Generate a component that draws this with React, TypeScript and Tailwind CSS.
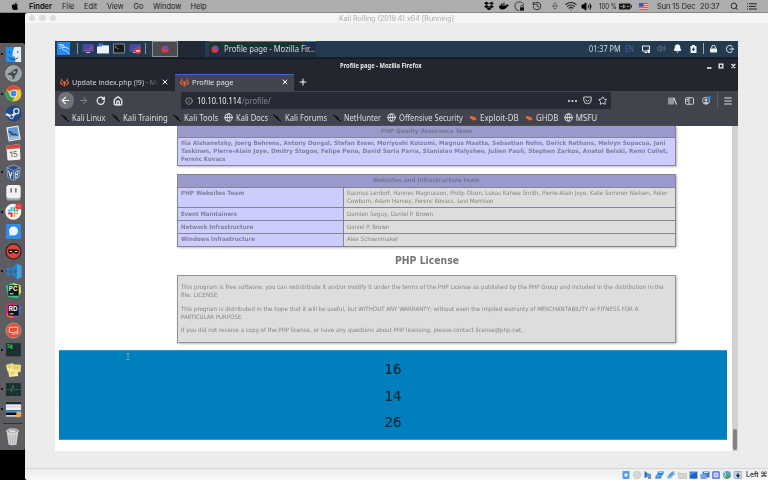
import React, { useLayoutEffect, useRef, useState } from "react";
import { Star, Plus, X, RotateCw, Home, Info, ArrowLeft, ArrowRight, Menu, Search, Wifi, Volume2, Globe, Bell, History } from "lucide-react";
import { FaApple, FaDocker, FaDropbox, FaGitlab } from "react-icons/fa";

/* One line of text, condensed or stretched to fill the width of its box. */
function Fit({ className = "", children }: { className?: string; children: React.ReactNode }) {
  const box = useRef<HTMLSpanElement>(null);
  const inner = useRef<HTMLSpanElement>(null);
  const [scale, setScale] = useState(1);
  useLayoutEffect(() => {
    if (box.current && inner.current && inner.current.offsetWidth) {
      setScale(box.current.getBoundingClientRect().width / inner.current.offsetWidth);
    }
  }, []);
  return (
    <span ref={box} className={`block shrink-0 whitespace-nowrap ${className}`}>
      <span ref={inner} className="inline-block origin-left" style={{ transform: `scaleX(${scale})` }}>
        {children}
      </span>
    </span>
  );
}

function MenuBar() {
  return (
    <header className="flex h-[12.5px] shrink-0 items-center border-b border-[#858585] bg-[#adadad] pt-[1px] font-['Inter',sans-serif] text-[7.4px] leading-[11px] text-[#1b1b1b]">
      <FaApple className="ml-[10.5px] h-[8.5px] w-2 shrink-0 text-black" />
      <Fit className="ml-[10.5px] w-[23px] font-bold">Finder</Fit>
      <Fit className="ml-[10px] w-[12px]">File</Fit>
      <Fit className="ml-[10px] w-[13px]">Edit</Fit>
      <Fit className="ml-[10px] w-[16.5px]">View</Fit>
      <Fit className="ml-[10px] w-[10px]">Go</Fit>
      <Fit className="ml-[9.5px] w-[28px]">Window</Fit>
      <Fit className="ml-[9.5px] w-[16px]">Help</Fit>
      <div className="ml-auto flex items-center">
        <FaDropbox className="size-[10px] text-black" />
        <FaDocker className="ml-[5px] size-[10px] text-black" />
        <svg className="ml-[5px] size-[11px]" viewBox="0 0 11 11" fill="none" stroke="#222" strokeWidth=".8">
          <path d="M9.6 4.2A4.4 4.4 0 1 0 5.2 9.7" />
          <rect x="6" y="6.3" width="4" height="3.3" fill="#111" stroke="none" />
          <path d="M6.8 6.4V5.5a1.2 1.2 0 0 1 2.4 0v.9" />
        </svg>
        <History className="ml-[7px] size-[10px]" strokeWidth={2} />
        <svg className="ml-[9px] h-2.5 w-2" viewBox="0 0 8 10" fill="none" stroke="#555" strokeWidth="1">
          <path d="M1 5h6M2.5 3.5 4 1.8l1.5 1.7M2.5 6.5 4 8.2l1.5-1.7" />
        </svg>
        <Wifi className="ml-[6.5px] size-[12px]" strokeWidth={2.4} />
        <Volume2 className="ml-1 size-[11px] fill-black" strokeWidth={2} />
        <Fit className="ml-[6.5px] w-[18px]">100 %</Fit>
        <svg className="ml-[2.5px] h-[7px] w-[13px]" viewBox="0 0 13 7">
          <rect x="0" y=".5" width="11.5" height="6" rx="1" fill="#1b1b1b" />
          <path d="M12.4 2.3v2.4" stroke="#1b1b1b" />
          <path d="M1.5 3.5h2M8 3.5h2M4.5 2v3l2-1.5z" stroke="#bbb" strokeWidth=".8" fill="none" />
        </svg>
        <svg className="ml-[7px] h-[7px] w-[9px]" viewBox="0 0 9 7">
          <path fill="#e4c8ca" d="M0 0h9v7H0z" />
          <path stroke="#c44852" strokeWidth=".9" d="M0 .5h9M0 2.4h9M0 4.4h9M0 6.4h9" />
          <path fill="#4454a0" d="M0 0h4.5v3.7H0z" />
        </svg>
        <Fit className="ml-[8.5px] w-[38.5px]">Sun 15 Dec</Fit>
        <Fit className="ml-[5px] w-[19.5px]">20:37</Fit>
        <Search className="ml-[10.5px] size-[8.5px]" strokeWidth={2.4} />
        <svg className="ml-[8px] mr-[11.5px] h-[7px] w-[10px]" viewBox="0 0 10 7" stroke="#222" strokeWidth="1">
          <path d="M0 .8h1M2 .8h8M0 3.4h1M2 3.4h7M0 6h1M2 6h8" />
        </svg>
      </div>
    </header>
  );
}

function DockIcon({ running = false, children }: { running?: boolean; children: React.ReactNode }) {
  return (
    <div className="flex h-[19.72px] shrink-0 items-center">
      <span className={`ml-[1px] size-[2px] rounded-full ${running ? "bg-black" : ""}`} />
      <svg className="ml-[1.5px] size-[17px]" viewBox="0 0 36 36">
        {children}
      </svg>
    </div>
  );
}

function Dock() {
  return (
    <nav className="mt-[30.5px] flex h-[407px] w-[24.5px] flex-col rounded-r-[2px] bg-[#5d5d61] pt-[1.3px]">
      <DockIcon running>
        <rect x="2" y="2" width="32" height="32" rx="3" fill="#2490ea" />
        <path d="M20 2h14v32H22c-1-5-1-9-1-12h-5c0-7 1-14 4-20z" fill="#e5eef6" />
        <path d="M10 11v4M27 11v4M8 24c5 6 15 6 20 0" stroke="#153e60" strokeWidth="2" fill="none" />
      </DockIcon>
      <DockIcon>
        <circle cx="18" cy="18" r="16.5" fill="#9ca3a8" stroke="#c4cacc" strokeWidth="1.5" />
        <path d="M27 8c-7 0-11 3-14 8l-5 1-2 4 6 0 4 4v6l4-3 1-5c4-3 6-8 6-15z" fill="#43494f" />
        <circle cx="20" cy="15" r="2.5" fill="#b4babe" />
      </DockIcon>
      <DockIcon running>
        <circle cx="18" cy="18" r="17" fill="#f3c631" />
        <path d="M18 18 3.3 9.5A17 17 0 0 1 32.700 9.500H18z" fill="#df4937" />
        <path d="M3.300 9.500 12 24l4 10.900A17 17 0 0 1 3.300 9.500z" fill="#36a057" />
        <path d="m12 22 7 4-4 8.900-8-4z" fill="#36a057" />
        <circle cx="18" cy="18" r="8.2" fill="#f4f4f4" />
        <circle cx="18" cy="18" r="6.2" fill="#4586e8" />
      </DockIcon>
      <DockIcon>
        <circle cx="18" cy="18" r="17" fill="#1c4c83" />
        <path d="m2 19 12 6 9-9" stroke="#e8edf2" strokeWidth="5" fill="none" />
        <circle cx="14" cy="25" r="4" fill="#1c4c83" stroke="#e8edf2" strokeWidth="2" />
        <circle cx="24" cy="13" r="5.5" fill="#1c4c83" stroke="#e8edf2" strokeWidth="2.5" />
      </DockIcon>
      <DockIcon>
        <g transform="rotate(-10 18 18)">
          <rect x="5" y="3" width="26" height="30" fill="#eef0f2" />
          <rect x="7.5" y="5.5" width="21" height="25" fill="#5b9ad6" />
          <path d="M8 11c5 0 7 4 9 8 4-1 8 1 10 5l-7-2c-4 0-6-1-7-4-2-1-4-4-5-7z" fill="#4b3a34" />
          <path d="M8 24c6-2 12 1 20 1v5.500H8z" fill="#9bc1df" />
        </g>
      </DockIcon>
      <DockIcon>
        <g transform="rotate(-4 18 18)">
          <rect x="4" y="2" width="28" height="32" rx="3" fill="#f3f1ef" />
          <path d="M4 10V5a3 3 0 0 1 3-3h22a3 3 0 0 1 3 3v5z" fill="#d8473f" />
          <text x="18" y="28" textAnchor="middle" fontSize="17" fontFamily="Inter" fill="#55504e">15</text>
        </g>
      </DockIcon>
      <DockIcon running>
        <path d="m18 2 14 6-2 20-12 7L6 28 4 8z" fill="#2b4d80" />
        <path d="m4 8 14 6 14-6M18 14v21M4 8l2 20 12 7 12-7 2-20L18 2z" stroke="#a9bfdb" strokeWidth="1.500" fill="none" />
        <path d="m7.500 14 4 13 3.500-10" stroke="#e2ebf5" strokeWidth="2.500" fill="none" />
        <path d="m22 17 6-3-.5 6-5 2.500 4.500-1-.5 6-5 2.500z" stroke="#e2ebf5" strokeWidth="2" fill="none" />
      </DockIcon>
      <DockIcon>
        <rect x="3" y="4" width="30" height="31" rx="6" fill="#a7a6ac" />
        <rect x="3" y="2" width="30" height="28" rx="5" fill="#f1f0f3" />
        <path d="M13 9v9M23 9v9" stroke="#4d474d" strokeWidth="2.5" />
      </DockIcon>
      <DockIcon running>
        <circle cx="17.500" cy="18.500" r="17" fill="#f6f3f2" />
        <g fill="none" strokeWidth="4" strokeLinecap="round">
          <path d="M14 10v6M8 16h3" stroke="#38bde8" />
          <path d="M20 10v7M26 16h-1" stroke="#2fb17d" />
          <path d="M20 22h6M20 27v1" stroke="#e7b237" />
          <path d="M8 22h6v6" stroke="#dc2a5b" />
        </g>
        <circle cx="29" cy="7" r="6.8" fill="#f03c3a" />
        <path d="M26.500 7h5" stroke="#ffb5a9" strokeWidth="1.5" />
      </DockIcon>
      <DockIcon>
        <rect x="2" y="2" width="32" height="32" rx="3" fill="#2f8ce8" />
        <circle cx="18" cy="17" r="9.500" fill="#eff5fc" />
        <path d="m9 27 2-8 6 6z" fill="#eff5fc" />
      </DockIcon>
      <DockIcon>
        <circle cx="18" cy="18" r="16" fill="#db4637" stroke="#292021" strokeWidth="2.5" />
        <path d="M7 14h22v6c-2 4-7 4-9 0h-4c-2 4-7 4-9 0z" fill="#181213" />
        <path d="M10 18h5M21 18h5" stroke="#fff" strokeWidth="2" />
      </DockIcon>
      <DockIcon running>
        <path d="M25 1 35 6v24l-10 5z" fill="#3aa3ea" />
        <path d="M25 1v10L6 28l-5-4zM25 35V25L6 8l-5 4z" fill="#1f82ca" />
      </DockIcon>
      <DockIcon>
        <path d="M2 8 15 2l18 5 1 16-7 11-20-2z" fill="#29cf83" />
        <path d="M18 2l14 5 2 14-5 7L18 15z" fill="#d9ed58" />
        <rect x="7" y="7" width="22" height="22" fill="#111" />
        <text x="8" y="20" fontSize="13.500" fontWeight="bold" fontFamily="Inter" fill="#fff">PC</text>
        <path d="M10 25h8" stroke="#fff" strokeWidth="2" />
      </DockIcon>
      <DockIcon>
        <path d="M2 8 13 2l20 6-2 24-15 3-14-6z" fill="#d92b60" />
        <path d="m23 4 11 6-2 17-11 8z" fill="#3a76e3" />
        <path d="M4 24h12v10L5 31z" fill="#f17b36" />
        <rect x="7" y="7" width="22" height="22" fill="#151018" />
        <text x="8" y="20" fontSize="13.500" fontWeight="bold" fontFamily="Inter" fill="#fff">RD</text>
        <path d="M10 25h8" stroke="#fff" strokeWidth="2" />
      </DockIcon>
      <DockIcon>
        <circle cx="18" cy="18" r="16" fill="#df5036" stroke="#ccaaa1" strokeWidth="1.5" />
        <path d="M9 11h18v11H9zM14 26h7" stroke="#f4d5cd" strokeWidth="2" fill="none" />
        <circle cx="25" cy="22" r="4" fill="#e9a493" />
      </DockIcon>
      <DockIcon running>
        <rect x="2" y="4" width="32" height="29" rx="1" fill="#1f2e33" stroke="#4b5b60" />
        <text x="4" y="15" fontSize="11" fontFamily="Liberation Mono" fontWeight="bold" fill="#29b64c">$▮</text>
      </DockIcon>
      <DockIcon>
        <path d="m2 8 15-4 3 13-15 5z" fill="#f2e58c" />
        <path d="m15 7 19 1-1 16-18-2z" fill="#eadc7d" />
        <path d="m6 18 20-1 2 15-19 2z" fill="#f8ed9c" />
        <path d="m5 10 9-2M6 14l7-2M19 13h10M19 17h8M10 24l12-1M11 28l10-1" stroke="#ad8a49" strokeWidth="1" />
      </DockIcon>
      <DockIcon running>
        <rect x="2" y="4" width="32" height="28" rx="1" fill="#19282b" stroke="#4b5b60" />
        <path d="M2 12h32M2 26h32M11 4v28M24 4v28" stroke="#284d47" />
        <path d="M3 19h7l2-4 2 9 3-16 3 13 3-3h10" stroke="#3c8f72" strokeWidth="1.3" fill="none" />
      </DockIcon>
      <DockIcon running>
        <rect x="2" y="2" width="32" height="31" fill="#edf0f3" />
        <path d="M2 2h32v5H2z" fill="#23262b" />
        <path d="M2 10h32v4H2z" fill="#d5d8e8" />
        <path d="M2 19h32v4H2z" fill="#2380c3" />
        <path d="M2 24h23v6H2z" fill="#08090b" />
        <path d="m24 24 5-3 6 5-2 8-8 1z" fill="#e3aa55" />
      </DockIcon>
      <div className="ml-[3px] mt-[4.5px] h-px w-[18.5px] shrink-0 bg-[#333]" />
      <div className="mt-[4px] flex justify-center pl-[1px]">
        <svg className="h-[18px] w-[15px]" viewBox="0 0 30 36">
          <path d="m3 5 4 28c3 2 13 2 16 0l4-28z" fill="#d0d0d0" />
          <ellipse cx="15" cy="6" rx="12" ry="4.500" fill="#9a9c9c" stroke="#e3e3e3" strokeWidth="1.5" />
          <path d="m9 13 2 19M15 13v20M21 13l-2 19" stroke="#b7b7b7" strokeWidth="2" />
          <path d="m7 6 4-3 3 3 4-2 4 3-6 2z" fill="#e9e9e9" />
        </svg>
      </div>
    </nav>
  );
}

function FirefoxMark({ className = "" }: { className?: string }) {
  return (
    <svg className={`size-[8px] shrink-0 ${className}`} viewBox="0 0 16 16">
      <circle cx="8" cy="8.500" r="7" fill="#e23442" />
      <path d="M7 1c5 0 8 3 8 7-2-3-4-4-8-7z" fill="#e23442" />
      <circle cx="8.500" cy="6.500" r="4.500" fill="#2c6ddc" />
      <path d="M3 5c3 0 4 2 6 4 1 1 3 0 4-1-1 4-7 5-9 1z" fill="#e23442" />
    </svg>
  );
}

function Monitor({ recording = false }: { recording?: boolean }) {
  return (
    <svg className="h-[11px] w-[12px] shrink-0" viewBox="0 0 24 22">
      <path d="M1 2h22v15H1z" fill="#454aa3" />
      <path d="M1 17 23 4v13z" fill="#784c9c" />
      <path d="M8 19h8" stroke="#bab7d2" strokeWidth="2" />
      {recording && (
        <>
          <circle cx="18" cy="16" r="6" fill="#df343b" />
          <path d="M14 16h8" stroke="#fff" strokeWidth="2.5" />
        </>
      )}
    </svg>
  );
}

function KaliPanel() {
  return (
    <div className="flex h-[16.5px] shrink-0 items-center border-b border-[#172330] bg-[#243a4f] font-['Noto_Sans',sans-serif] text-[8.5px] leading-[14px] text-[#d5dbe0]">
      <svg className="ml-[1.500px] size-[13px] shrink-0" viewBox="0 0 26 26">
        <rect width="26" height="26" fill="#2386f3" />
        <path d="M3 5c6-1 12 1 13 6-4-1-7 2-4 5 3 2 8 0 11 7M4 9c4-2 8-2 11 0M5 14c2-3 5-4 9-3M16 11l6 1 1 3" stroke="#d9edff" strokeWidth="1.700" fill="none" />
      </svg>
      <i className="ml-[7px] h-[11px] w-px bg-[#8894a0]" />
      <div className="ml-[4px] flex gap-[3.700px]">
        <Monitor />
        <svg className="h-[11px] w-[12px]" viewBox="0 0 24 22">
          <path d="M3 1h8l2 3h9v8H3z" fill="#2d7fe6" />
          <path d="M0 7h9l2-2h13v16H0z" fill="#ecf1f6" />
        </svg>
        <svg className="h-[11px] w-[12px]" viewBox="0 0 24 22">
          <path d="M1 2h22v18H1z" fill="#171a1d" stroke="#888e92" strokeWidth="2" />
          <path d="m4 6 3 2-3 2M8 11h3" stroke="#ddd" fill="none" />
        </svg>
        <Monitor recording />
      </div>
      <i className="ml-[4px] h-[11px] w-px bg-[#8894a0]" />
      <div className="ml-[6px] flex h-full w-[26.500px] items-center justify-center border border-[#8b8c8e] bg-[#4b4b4e]">
        <FirefoxMark />
      </div>
      <div className="h-full w-[27px] bg-[#222936]" />
      <div className="ml-[4px] flex h-full w-[107px] items-center border-t-[1.500px] border-[#2074fa] bg-[#202e3e]">
        <FirefoxMark className="ml-[2px]" />
        <Fit className="ml-[5px] w-[91px]">Profile page - Mozilla Fir...</Fit>
      </div>
      <div className="ml-auto flex items-center">
        <Fit className="w-[32px] text-[8px]">01:37 PM</Fit>
        <Fit className="ml-[4px] w-[9.500px] text-[8px] text-[#4a5fbd]">EN</Fit>
        <svg className="ml-[7px] size-[8px]" viewBox="0 0 16 16" fill="none" stroke="#f3f3f3" strokeWidth="2">
          <path d="M11 12H1V2h14v7M5 15h5" />
          <path d="M11 9h5v7h-5z" fill="#f3f3f3" stroke="none" />
        </svg>
        <Volume2 className="ml-[7px] size-[9px] text-[#7c8790]" />
        <Bell className="ml-[7.500px] size-[9px] fill-white text-white" strokeWidth={2.5} />
        <svg className="ml-[7.500px] h-[8px] w-[7px]" viewBox="0 0 14 16">
          <path d="M1 2h3V0h6v2h3v14H1z" fill="#f1f1f1" />
          <path d="M7 5v7M4 8.500h6" stroke="#243a4f" strokeWidth="2" />
        </svg>
        <i className="ml-[6.500px] h-[11px] w-px bg-[#a2abb3]" />
        <svg className="ml-[6px] h-[8px] w-[7px]" viewBox="0 0 14 16">
          <path d="M0 7h14v8H0z" fill="#f2f2f2" />
          <path d="M3.500 7V4a3.500 3.500 0 0 1 7 0v3" stroke="#f2f2f2" strokeWidth="2" fill="none" />
        </svg>
        <svg className="ml-[9px] mr-[3.500px] size-[8px]" viewBox="0 0 16 16" fill="none" stroke="#eee" strokeWidth="2">
          <path d="M12.500 3a7 7 0 1 0 0 10M7 8h8M12 5l3 3-3 3" />
        </svg>
      </div>
    </div>
  );
}

function WindowTitle() {
  return (
    <div className="grid h-[16px] shrink-0 grid-cols-[270px_82px_1fr] items-center border-t border-[#161821] bg-[#23252f] pb-[1px] font-['Noto_Sans',sans-serif] text-[6.200px] font-bold leading-[14px] text-[#e9e9e9]">
      <Fit className="col-start-2 ml-[15px] w-[81.500px]">Profile page - Mozilla Firefox</Fit>
      <svg className="ml-auto mr-[1.500px] h-[6px] w-[29px]" viewBox="0 0 29 6" fill="none" stroke="#f2f2f2" strokeWidth="1.300">
        <path d="M0 5h4.500M12.200 1.200h3.600v3.600h-3.600zM24.500 1l3.700 4M28.200 1l-3.700 4" />
      </svg>
    </div>
  );
}

function TabStrip() {
  return (
    <div className="flex h-[17px] shrink-0 items-center bg-[#23252f] font-['Noto_Sans',sans-serif] text-[7.800px] leading-[14px] text-[#d2d2d4]">
      <FaGitlab className="ml-[4.500px] size-[9px] shrink-0 text-[#ef6b35]" />
      <div className="ml-[3.500px] w-[87px] overflow-hidden pb-[1px] [mask-image:linear-gradient(to_right,black_82%,transparent)]">
        <Fit className="w-[88px]">Update index.php (!9) · Ma</Fit>
      </div>
      <X className="ml-[2px] size-[8px] shrink-0 text-white" strokeWidth={3} />
      <div className="ml-[6px] flex h-full w-[119px] shrink-0 items-center border-t border-[#2f70d0] bg-[#42444e] pb-[1px]">
        <FaGitlab className="ml-[4.500px] size-[9px] shrink-0 text-[#ef6b35]" />
        <Fit className="ml-[3.500px] w-[41.500px] pb-[0.500px] text-[#e4e4e5]">Profile page</Fit>
        <X className="ml-auto mr-[5px] size-[8px] text-white" strokeWidth={3} />
      </div>
      <Plus className="ml-[4px] size-[10px] text-white" strokeWidth={2.500} />
    </div>
  );
}

function NavBar() {
  return (
    <div className="flex h-[20px] shrink-0 items-center bg-[#42444d] font-['Noto_Sans',sans-serif] text-[8px] leading-[14px] text-[#f2f2f2]">
      <div className="ml-[2.500px] flex size-[16.500px] items-center justify-center rounded-full bg-[#717278]">
        <ArrowLeft className="size-[11px]" strokeWidth={2.600} />
      </div>
      <ArrowRight className="ml-[4px] size-[11px] text-[#7b7c82]" strokeWidth={2.200} />
      <RotateCw className="ml-[7px] size-[9.500px]" strokeWidth={3} />
      <Home className="ml-[7px] size-[10px]" strokeWidth={3} />
      <div className="ml-[58px] flex h-[17px] w-[430px] items-center rounded-[2px] bg-[#272a35]">
        <Info className="ml-[4.500px] size-[8px] text-[#a7a8ad]" strokeWidth={2.200} />
        <Fit className="ml-[4px] w-[44.500px]">10.10.10.114</Fit>
        <Fit className="w-[28.500px] text-[#85878e]">/profile/</Fit>
        <svg className="ml-auto h-[2px] w-[9px]" viewBox="0 0 9 2" fill="#e5e5e5">
          <circle cx="1" cy="1" r="1" /><circle cx="4.500" cy="1" r="1" /><circle cx="8" cy="1" r="1" />
        </svg>
        <svg className="ml-[6px] size-[9px]" viewBox="0 0 18 18" fill="none" stroke="#c9cace" strokeWidth="2">
          <path d="M1.500 2h15v6a7.500 7.500 0 0 1-15 0zM5 7l4 4 4-4" />
        </svg>
        <Star className="ml-[6px] mr-[3.500px] size-[9.500px] text-[#cccdd1]" strokeWidth={2.500} />
      </div>
      <div className="ml-auto flex items-center">
        <svg className="h-[8px] w-[9px]" viewBox="0 0 18 16" stroke="#d8d8da" strokeWidth="2.200" fill="none">
          <path d="M2 1v14M6 1v14M10 1v14M12 2l5 13" />
        </svg>
        <svg className="ml-[8px] h-[8px] w-[9px]" viewBox="0 0 18 16" stroke="#d0d0d3" strokeWidth="2" fill="none">
          <rect x="1" y="1.500" width="16" height="13" rx="2" /><path d="M8 2v12M3 5h4M3 8h4" />
        </svg>
        <svg className="ml-[8px] size-[9px]" viewBox="0 0 18 18">
          <circle cx="8" cy="9.500" r="7" fill="none" stroke="#c9cacd" strokeWidth="1.800" />
          <circle cx="8" cy="8" r="3" fill="#d0d0d3" /><path d="M3 14c1-3 9-3 10 0-3 3-7 3-10 0z" fill="#d0d0d3" />
          <circle cx="14.500" cy="3.500" r="3.300" fill="#168ef0" />
        </svg>
        <i className="ml-[5.500px] h-[17px] w-px bg-[#5b5d65]" />
        <Menu className="ml-[5px] mr-[5px] size-[10px] text-[#e0e0e2]" strokeWidth={2.500} />
      </div>
    </div>
  );
}

function Slash() {
  return (
    <svg className="size-[8px] shrink-0" viewBox="0 0 16 16">
      <path d="m0 1 9 5 2 4 5 5-7-4-3-4z" fill="#080809" stroke="#080809" />
    </svg>
  );
}
function Ember() {
  return (
    <svg className="size-[8px] shrink-0" viewBox="0 0 16 16">
      <path d="m2 4 4 0 4 2 3 0 1 3 1 3-5 1-4-2-4-3z" fill="#ec6530" />
    </svg>
  );
}
function World() {
  return <Globe className="size-[9px] shrink-0 text-[#e4e4e5]" strokeWidth={2.400} />;
}

function Bookmarks() {
  return (
    <div className="flex h-[15px] shrink-0 items-center bg-[#42444d] pb-[1px] pl-[6px] font-['Noto_Sans',sans-serif] text-[8px] leading-[14px] text-[#dedee0]">
      <Slash /><Fit className="ml-[3px] w-[33.500px]">Kali Linux</Fit>
      <span className="w-[6px]" /><Slash /><Fit className="ml-[3.500px] w-[44.500px]">Kali Training</Fit>
      <span className="w-[5.500px]" /><Slash /><Fit className="ml-[3px] w-[34px]">Kali Tools</Fit>
      <span className="w-[6px]" /><World /><Fit className="ml-[2.500px] w-[32px]">Kali Docs</Fit>
      <span className="w-[5.500px]" /><Slash /><Fit className="ml-[3.500px] w-[42px]">Kali Forums</Fit>
      <span className="w-[6px]" /><Slash /><Fit className="ml-[3.500px] w-[37px]">NetHunter</Fit>
      <span className="w-[6px]" /><World /><Fit className="ml-[2.500px] w-[64px]">Offensive Security</Fit>
      <span className="w-[6px]" /><Ember /><Fit className="ml-[3px] w-[38.500px]">Exploit-DB</Fit>
      <span className="w-[6.500px]" /><Ember /><Fit className="ml-[3px] w-[22.500px]">GHDB</Fit>
      <span className="w-[6px]" /><World /><Fit className="ml-[2.500px] w-[22px]">MSFU</Fit>
    </div>
  );
}

function TeamRow({ name, height, children }: { name: React.ReactNode; height: string; children: React.ReactNode }) {
  return (
    <div className={`grid grid-cols-[166px_1fr] border-t border-[#858593] ${height}`}>
      <div className="border-r border-[#858593] bg-[#ccccff] pl-[2.500px] pt-[1.500px] font-bold text-[#808096]">{name}</div>
      <div className="bg-[#dddddd] pl-[2.500px] pt-[1.500px]">{children}</div>
    </div>
  );
}

function PhpInfo() {
  return (
    <div className="ml-[122px] flex w-[499px] flex-col font-['DejaVu_Sans',sans-serif] text-[6px] leading-[8px] text-[#858585]">
      <section className="h-[40.500px] border border-t-0 border-[#858593] bg-[#ccccff] font-bold text-[#808096] shadow-[0.5px_1px_2px_#bbb]">
        <div className="flex h-[12px] items-center justify-center border-b border-[#858593] bg-[#9999cc] pb-[1px] text-[#777790]">
          <Fit className="w-[91px]">PHP Quality Assurance Team</Fit>
        </div>
        <div className="pl-[2.500px] pt-[1.500px]">
          <Fit className="w-[484.500px]">Ilia Alshanetsky, Joerg Behrens, Antony Dovgal, Stefan Esser, Moriyoshi Koizumi, Magnus Maatta, Sebastian Nohn, Derick Rethans, Melvyn Sopacua, Jani</Fit>
          <Fit className="w-[487px]">Taskinen, Pierre-Alain Joye, Dmitry Stogov, Felipe Pena, David Soria Parra, Stanislav Malyshev, Julien Pauli, Stephen Zarkos, Anatol Belski, Remi Collet,</Fit>
          <Fit className="w-[45px]">Ferenc Kovacs</Fit>
        </div>
      </section>
      <section className="mt-[7.500px] border border-[#858593] shadow-[0.5px_1px_2px_#bbb]">
        <div className="flex h-[12px] items-center justify-center bg-[#9999cc] pb-[0.500px] font-bold text-[#777790]">
          <Fit className="w-[107px]">Websites and Infrastructure team</Fit>
        </div>
        <TeamRow height="h-[20.500px]" name={<Fit className="w-[63.500px]">PHP Websites Team</Fit>}>
          <Fit className="w-[320.500px]">Rasmus Lerdorf, Hannes Magnusson, Philip Olson, Lukas Kahwe Smith, Pierre-Alain Joye, Kalle Sommer Nielsen, Peter</Fit>
          <Fit className="w-[146px]">Cowburn, Adam Harvey, Ferenc Kovacs, Levi Morrison</Fit>
        </TeamRow>
        <TeamRow height="h-[13px]" name={<Fit className="w-[56.500px]">Event Maintainers</Fit>}>
          <Fit className="w-[86px]">Damien Seguy, Daniel P. Brown</Fit>
        </TeamRow>
        <TeamRow height="h-[12.500px]" name={<Fit className="w-[72px]">Network Infrastructure</Fit>}>
          <Fit className="w-[42px]">Daniel P. Brown</Fit>
        </TeamRow>
        <TeamRow height="h-[13px]" name={<Fit className="w-[74px]">Windows Infrastructure</Fit>}>
          <Fit className="w-[51.500px]">Alex Schoenmaker</Fit>
        </TeamRow>
      </section>
      <h2 className="mt-[7.500px] flex h-[13px] items-center justify-center text-[9.600px] font-bold text-[#777]">
        <Fit className="w-[64px]">PHP License</Fit>
      </h2>
      <section className="mt-[8px] h-[68px] border border-[#939393] bg-[#dddddd] pl-[2.500px] pt-[7px] shadow-[0.5px_1px_2px_#bbb]">
        <Fit className="w-[483px]">This program is free software; you can redistribute it and/or modify it under the terms of the PHP License as published by the PHP Group and included in the distribution in the</Fit>
        <Fit className="w-[36px]">file: LICENSE</Fit>
        <Fit className="mt-[5.500px] w-[457px]">This program is distributed in the hope that it will be useful, but WITHOUT ANY WARRANTY; without even the implied warranty of MERCHANTABILITY or FITNESS FOR A</Fit>
        <Fit className="w-[62px]">PARTICULAR PURPOSE.</Fit>
        <Fit className="mt-[5.500px] w-[342px]">If you did not receive a copy of the PHP license, or have any questions about PHP licensing, please contact license@php.net.</Fit>
      </section>
    </div>
  );
}

function Page() {
  return (
    <main className="flex min-h-0 flex-1 bg-white">
      <div className="min-w-0 flex-1">
        <PhpInfo />
        <div className="relative ml-[4px] mr-[4.500px] mt-[7px] grid h-[90px] grid-rows-3 justify-items-stretch border-y border-[#289bd0] bg-[#007fbe] pb-[8px] text-center font-['DejaVu_Sans',sans-serif] text-[13.500px] leading-[26px] text-[#17232b]">
          <div className="pt-[5px]">16</div>
          <div className="border-t border-[#0878b3] pt-[4px]">14</div>
          <div className="border-t border-[#0878b3] pt-[4px]">26</div>
          <svg className="absolute left-[67px] top-[2px] h-[7px] w-[4px]" viewBox="0 0 4 7" fill="none" stroke="#74a4bb" strokeWidth=".8">
            <path d="M.5.5h3M2 .5v6M.5 6.500h3" />
          </svg>
        </div>
      </div>
      <div className="flex w-[6px] flex-col justify-end bg-[#d1d1d1] pb-[1px] pl-[1.500px]">
        <span className="h-[21.500px] w-[3.500px] rounded-full bg-[#808182]" />
      </div>
    </main>
  );
}

function StatusIcons() {
  return (
    <svg className="h-[10px] w-[121px]" viewBox="0 0 121 10">
      <rect x="1.500" y="1" width="7" height="8" rx="1" fill="#5aa3ea" /><circle cx="5" cy="5" r="2.300" fill="#d7e8f9" stroke="#2871c2" strokeWidth=".6" />
      <circle cx="16" cy="5" r="3.700" fill="#d9d9d9" stroke="#b7b7b7" strokeWidth=".6" /><circle cx="16" cy="5" r="1" fill="#f7f7f7" stroke="#bbb" strokeWidth=".5" />
      <path d="m23.500 1 3 2v4l-3 1z" fill="#2475d8" /><path d="m26 3 4 1v5h-3z" fill="#7791b3" />
      <path d="M37 1.500h6l-1 3.500h-6zM35 5h6l-1 3.500h-6z" fill="#2c83dd" /><path d="M37.500 2.500h4M35.500 6h4" stroke="#a9d2f8" />
      <path d="m46 7 4-5 3-1 1 3-4 4-3 1z" fill="#81b6e4" /><path d="m48 6 4-3" stroke="#2d74b8" />
      <path d="m57 2.500 3 1h5.500v5h-8z" fill="#d4d4d4" stroke="#afafaf" strokeWidth=".5" />
      <path d="M68.500 1.500h8v7h-8z" fill="#3f8ce3" /><path d="m69 6 7-4v6.500h-7z" fill="#215fc3" />
      <path d="M81.500 1.500h7v6h-7z" fill="#3d78d8" /><path d="M79.500 4h6v5h-6z" fill="#789fe9" /><path d="M83 2.500h4" stroke="#dae7ff" />
      <rect x="91" y="1" width="8" height="8" rx="1.500" fill="#6f86df" /><rect x="93" y="3" width="4" height="4" rx="1" fill="#a9b9f2" stroke="#fff" strokeWidth=".6" />
      <circle cx="106" cy="5" r="4" fill="#619fc9" /><path d="m105 4 5 2-4 3z" fill="#43a94c" /><path d="m103 2 2 2-2 3" stroke="#cae3e9" fill="none" />
      <rect x="113" y="1.500" width="8" height="7" rx="1" fill="#bfd9ef" stroke="#6c92b2" strokeWidth=".6" /><path d="M117 2.500v3M115.500 5h3L117 7.500z" fill="#13293d" stroke="#13293d" strokeWidth=".8" />
    </svg>
  );
}

export default function App() {
  return (
    <div className="flex h-[480px] w-[768px] flex-col overflow-hidden bg-black">
      <MenuBar />
      <div className="flex min-h-0 flex-1">
        <Dock />
        <div className="flex min-w-0 flex-1 flex-col rounded-tl-[3px] rounded-bl-[3px] bg-[#ececec]">
          <div className="grid h-[10.500px] shrink-0 grid-cols-[1fr_115px_1fr] items-center rounded-tl-[3px] bg-[#f5f5f5] font-['Inter',sans-serif] text-[7px] leading-[10px] text-[#acacac]">
            <div className="ml-[4px] flex gap-[4px]">
              <i className="size-[6.500px] rounded-full bg-[#dcdcdc]" />
              <i className="size-[6.500px] rounded-full bg-[#dcdcdc]" />
              <i className="size-[6.500px] rounded-full bg-[#dcdcdc]" />
            </div>
            <Fit className="w-[115px] pt-[1px]">Kali Rolling (2019.4) x64 [Running]</Fit>
          </div>
          <div className="ml-[30.500px] mt-[18px] flex h-[410px] w-[682.500px] shrink-0 flex-col overflow-hidden">
            <KaliPanel />
            <WindowTitle />
            <TabStrip />
            <NavBar />
            <Bookmarks />
            <Page />
          </div>
          <footer className="mt-auto flex h-[12px] items-center justify-end rounded-bl-[3px] border-t border-[#d4d4d4] bg-gradient-to-b from-[#ededed] to-[#f8f8f8] font-['Inter','DejaVu_Sans',sans-serif] text-[7.200px] font-medium leading-[10px] text-[#1b1b1b]">
            <StatusIcons />
            <Fit className="ml-[4px] mr-[1px] w-[21px]">Left ⌘</Fit>
          </footer>
        </div>
      </div>
    </div>
  );
}
